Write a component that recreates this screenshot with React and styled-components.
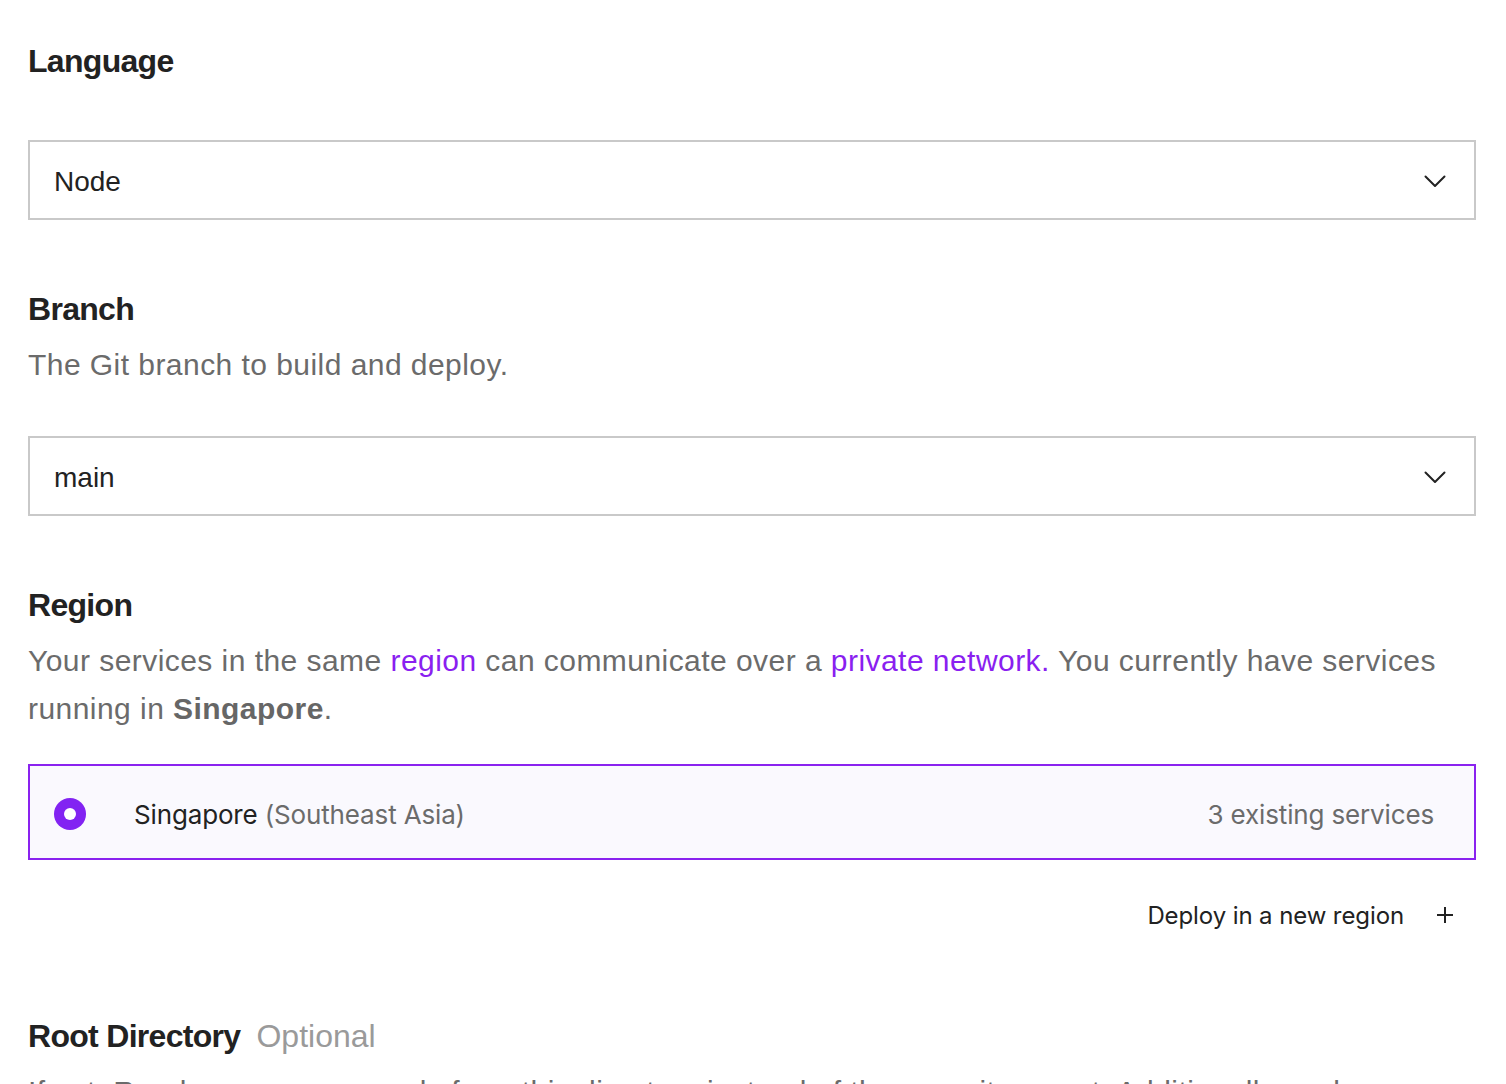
import React from "react";
import styled, { createGlobalStyle } from "styled-components";

const GlobalStyle = createGlobalStyle`
  html, body {
    margin: 0;
    padding: 0;
    background: #fff;
  }
  body {
    font-family: "Liberation Sans", Arial, sans-serif;
    color: #222;
  }
`;

const Page = styled.div`
  padding: 43px 30px 0 28px;
  height: 1084px;
  box-sizing: border-box;
  overflow: hidden;
`;

const Section = styled.section`
  margin-top: ${(p) => p.$gap || 0}px;
`;

const Heading = styled.h2`
  margin: 0;
  font-size: 32px;
  line-height: 36px;
  font-weight: 700;
  letter-spacing: -0.7px;
  color: #222;
  display: flex;
  align-items: baseline;
  gap: 16px;
`;

const Optional = styled.span`
  font-weight: 400;
  color: #9a9a9a;
  letter-spacing: 0;
`;

const Description = styled.p`
  margin: 14px 0 0;
  font-size: 30px;
  line-height: 48px;
  letter-spacing: 0.45px;
  color: #6b6b6b;

  b {
    color: #666;
    font-weight: 700;
  }
`;

const Link = styled.a`
  color: #8a1ff0;
  text-decoration: none;
`;

const Select = styled.div`
  margin-top: ${(p) => p.$gap}px;
  height: 80px;
  box-sizing: border-box;
  border: 2px solid #c9c9c9;
  display: flex;
  align-items: center;
  justify-content: space-between;
  padding: 4px 28px 0 24px;
  font-size: 28px;
  color: #222;
  cursor: pointer;
`;

const Chevron = styled.svg`
  width: 22px;
  height: 13px;
  margin-top: -2px;
`;

const RegionCard = styled.label`
  margin-top: 31px;
  height: 96px;
  box-sizing: border-box;
  border: 2px solid #8a22ef;
  background: #faf9fe;
  display: flex;
  align-items: center;
  padding: 4px 40px 0 24px;
  font-family: Inter, "Liberation Sans", sans-serif;
  font-size: 26px;
  letter-spacing: -0.15px;
  color: #222;
`;

const Radio = styled.span`
  width: 32px;
  height: 32px;
  border-radius: 50%;
  background: #8223f2;
  display: flex;
  align-items: center;
  justify-content: center;
  flex-shrink: 0;

  &::after {
    content: "";
    width: 12px;
    height: 12px;
    border-radius: 50%;
    background: #fff;
  }
`;

const RegionName = styled.span`
  margin-left: 48px;
  flex: 1;
`;

const Muted = styled.span`
  color: #6b6b6b;
`;

const DeployRow = styled.div`
  margin-top: 39px;
  height: 32px;
  display: flex;
  justify-content: flex-end;
  align-items: center;
  gap: 32px;
  padding-right: 22px;
  font-family: Inter, "Liberation Sans", sans-serif;
  font-size: 24px;
  letter-spacing: -0.1px;
  color: #222;
  cursor: pointer;
`;

const PlusIcon = styled.svg`
  width: 18px;
  height: 18px;
`;

function ChevronDown() {
  return (
    <Chevron viewBox="0 0 22 13" fill="none">
      <path d="M1.5 1.5 L11 11 L20.5 1.5" stroke="#222" strokeWidth="2" strokeLinecap="round" strokeLinejoin="round" />
    </Chevron>
  );
}

export default function App() {
  return (
    <>
      <GlobalStyle />
      <Page>
        <Section>
          <Heading>Language</Heading>
          <Select $gap={61}>
            <span>Node</span>
            <ChevronDown />
          </Select>
        </Section>

        <Section $gap={71}>
          <Heading>Branch</Heading>
          <Description>The Git branch to build and deploy.</Description>
          <Select $gap={47}>
            <span>main</span>
            <ChevronDown />
          </Select>
        </Section>

        <Section $gap={71}>
          <Heading>Region</Heading>
          <Description>
            Your services in the same <Link href="#">region</Link> can communicate over a{" "}
            <Link href="#">private network.</Link> You currently have services running in{" "}
            <b>Singapore</b>.
          </Description>
          <RegionCard>
            <Radio />
            <RegionName>
              Singapore <Muted>(Southeast Asia)</Muted>
            </RegionName>
            <Muted>3 existing services</Muted>
          </RegionCard>
          <DeployRow>
            <span>Deploy in a new region</span>
            <PlusIcon viewBox="0 0 18 18" fill="none">
              <path d="M9 1 V17 M1 9 H17" stroke="#222" strokeWidth="2" />
            </PlusIcon>
          </DeployRow>
        </Section>

        <Section $gap={87}>
          <Heading>
            Root Directory <Optional>Optional</Optional>
          </Heading>
          <Description>
            If set, Render runs commands from this directory instead of the repository root. Additionally, code changes
            outside of this directory do not trigger an auto-deploy.
          </Description>
        </Section>
      </Page>
    </>
  );
}
